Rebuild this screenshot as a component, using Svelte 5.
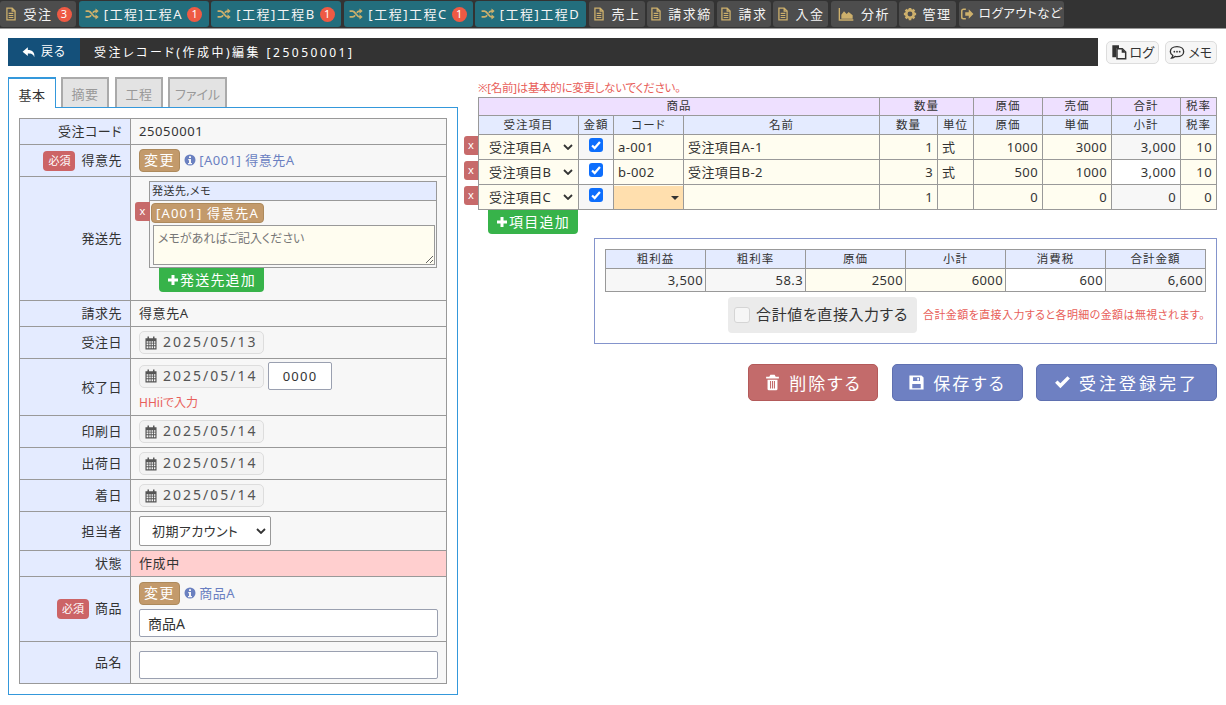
<script>
  const navs = [
    { t: '受注', i: 'file', n: 3, w: 76 },
    { t: '[工程]工程A', i: 'random', n: 1, teal: true, w: 130 },
    { t: '[工程]工程B', i: 'random', n: 1, teal: true, w: 130 },
    { t: '[工程]工程C', i: 'random', n: 1, teal: true, w: 129 },
    { t: '[工程]工程D', i: 'random', teal: true, w: 111 },
    { t: '売上', i: 'file', w: 56 },
    { t: '請求締', i: 'file', w: 67 },
    { t: '請求', i: 'file', w: 54 },
    { t: '入金', i: 'file', w: 55 },
    { t: '分析', i: 'chart', w: 66, wide: true },
    { t: '管理', i: 'cog', w: 57 },
    { t: 'ログアウトなど', i: 'signout', w: 105, tight: true }
  ];
  const items = [
    { s: '受注項目A', c: 'a-001', n: '受注項目A-1', q: 1, u: '式', g: 1000, p: 3000, t: '3,000', r: 10, grey: true },
    { s: '受注項目B', c: 'b-002', n: '受注項目B-2', q: 3, u: '式', g: 500, p: 1000, t: '3,000', r: 10 },
    { s: '受注項目C', c: '', n: '', q: 1, u: '', g: 0, p: 0, t: '0', r: 0, grey: true, open: true }
  ];
  const totals = [
    ['粗利益', '3,500', ''], ['粗利率', '58.3', ''], ['原価', '2500', 'cream'],
    ['小計', '6000', 'cream'], ['消費税', '600', 'white'], ['合計金額', '6,600', '']
  ];
</script>

{#snippet icon(name, cls = '')}
  <svg class="ico {cls}" viewBox="0 0 24 24" aria-hidden="true">
    {#if name === 'file'}
      <path fill="none" stroke="currentColor" stroke-width="2.2" d="M5 2h9l5 5v15H5z M14 2v5h5"/>
      <path fill="none" stroke="currentColor" stroke-width="2" d="M8 11h8M8 14.5h8M8 18h8"/>
    {:else if name === 'random'}
      <path fill="none" stroke="currentColor" stroke-width="3" d="M1 7h5c5 0 7 10 12 10h2M1 17h5c2 0 3.500-1.500 4.500-3M13.500 10c1-1.500 2.500-3 4.500-3h2"/>
      <path fill="currentColor" d="M18 2.500l5.500 4.500-5.500 4.500zM18 12.500l5.500 4.500-5.500 4.500z"/>
    {:else if name === 'chart'}
      <path fill="none" stroke="currentColor" stroke-width="2" d="M2 3v18h21"/>
      <path fill="currentColor" d="M5 19v-6l4-5 4 4 3-3 6 5v5z"/>
    {:else if name === 'cog'}
      <circle cx="12" cy="12" r="6.500" fill="none" stroke="currentColor" stroke-width="4.500"/>
      <path fill="none" stroke="currentColor" stroke-width="4.500" d="M12 1.500v4M12 18.500v4M1.500 12h4M18.500 12h4M4.600 4.600l2.800 2.800M16.600 16.600l2.800 2.800M4.600 19.400l2.800-2.800M16.600 7.400l2.800-2.800"/>
    {:else if name === 'signout'}
      <path fill="none" stroke="currentColor" stroke-width="2.600" d="M10 4H6a3 3 0 0 0-3 3v10a3 3 0 0 0 3 3h4"/>
      <path fill="currentColor" d="M9 9h6V4l8 8-8 8v-5H9z"/>
    {:else if name === 'reply'}
      <path fill="currentColor" d="M10 4L1 11.500 10 19v-4.500c6 0 9.500 1 11 6.500 1.500-8-3-12.500-11-12.500z"/>
    {:else if name === 'files'}
      <path fill="currentColor" d="M2 2h10v4H8v14H2z"/>
      <path fill="none" stroke="currentColor" stroke-width="2.200" d="M9 7h8l5 5v10H9z"/>
      <path fill="currentColor" d="M16 7v6h6z"/>
    {:else if name === 'comment'}
      <path fill="none" stroke="currentColor" stroke-width="2" d="M12 4c6 0 10 3.200 10 7.500S18 19 12 19c-1 0-2-.1-3-.4C7.500 20 6 20.800 4 21c1-1.200 1.600-2.500 1.800-3.800C3.500 15.800 2 13.800 2 11.500 2 7.200 6 4 12 4z"/>
      <circle cx="8" cy="11.500" r="1.300" fill="currentColor"/><circle cx="12" cy="11.500" r="1.300" fill="currentColor"/><circle cx="16" cy="11.500" r="1.300" fill="currentColor"/>
    {:else if name === 'calendar'}
      <path fill="currentColor" fill-rule="evenodd" d="M6 1h2.500v3H15.500V1H18v3h3.500v19h-19V4H6zM4.500 9v2.500h3V9zM9 9v2.500h2.500V9zM13 9v2.500h2.500V9zM17 9v2.500h2.500V9zM4.500 13v3h3v-3zM9 13v3h2.500v-3zM13 13v3h2.500v-3zM17 13v3h2.500v-3zM4.500 17.500V21h3v-3.500zM9 17.500V21h2.500v-3.500zM13 17.500V21h2.500v-3.500zM17 17.500V21h2.500v-3.500z"/>
    {:else if name === 'info'}
      <path fill="currentColor" fill-rule="evenodd" d="M12 1a11 11 0 1 0 0 22 11 11 0 0 0 0-22zM10 4.500h4V8h-4zM8.500 10h5.500v8h2v2.500H8V18h2v-5.500H8.500z"/>
    {:else if name === 'plus'}
      <path fill="currentColor" d="M9 2h6v7h7v6h-7v7H9v-7H2V9h7z"/>
    {:else if name === 'trash'}
      <path fill="currentColor" fill-rule="evenodd" d="M9 1h6l1.500 3H21v2.500H3V4h4.500zM5 8h14v13a2 2 0 0 1-2 2H7a2 2 0 0 1-2-2zM8.500 10v10.500h1.500V10zM11.300 10v10.500h1.500V10zM14 10v10.500h1.500V10z"/>
    {:else if name === 'save'}
      <path fill="currentColor" fill-rule="evenodd" d="M2 2h17l3 3v17H2zM7 4.500V10h10V4.500zM13 5.500h2.500V9H13zM6 14v6h12v-6z"/>
    {:else if name === 'check'}
      <path fill="currentColor" d="M9 20L1.500 12.500 5 9l4 4L19 3l3.500 3.500z"/>
    {/if}
  </svg>
{/snippet}

{#snippet dateBtn(v)}
  <span class="date">{@render icon('calendar', 'cal')}<span>{v}</span></span>
{/snippet}

<nav class="nav">
  {#each navs as n}
    <a class="nav-item" class:teal={n.teal} class:tight={n.tight} class:wide={n.wide} style="width:{n.w}px">
      {@render icon(n.i, 'nav-ico')}
      <span>{n.t}</span>
      {#if n.n}<b class="count">{n.n}</b>{/if}
    </a>
  {/each}
</nav>

<header class="head">
  <div class="titlebar">
    <a class="back">{@render icon('reply', 'back-ico')}戻る</a>
    <h1>受注レコード(作成中)編集 [25050001]</h1>
  </div>
  <a class="mini">{@render icon('files', 'mini-ico')}ログ</a>
  <a class="mini">{@render icon('comment', 'mini-ico')}メモ</a>
</header>

<main class="main">
  <section class="left">
    <div class="tabs">
      <span class="tab active t48">基本</span>
      <span class="tab t48">摘要</span>
      <span class="tab t48 shifted">工程</span>
      <span class="tab t59">ファイル</span>
    </div>
    <div class="panel">
      <table class="form">
        <tbody>
          <tr class="h26"><th>受注コード</th><td>25050001</td></tr>
          <tr class="h32"><th><span class="req">必須</span>得意先</th>
            <td><span class="chg">変更</span>{@render icon('info', 'info-ico')}<span class="link">[A001] 得意先A</span></td></tr>
          <tr class="h124"><th>発送先</th>
            <td class="ship-cell">
              <div class="ship">
                <div class="ship-head">発送先,メモ</div>
                <div class="ship-body">
                  <span class="x ship-x">x</span>
                  <span class="chip">[A001] 得意先A</span>
                  <textarea class="memo" placeholder="メモがあればご記入ください"></textarea>
                </div>
              </div>
              <span class="add add-ship">{@render icon('plus', 'plus-ico')}発送先追加</span>
            </td></tr>
          <tr class="h26"><th>請求先</th><td>得意先A</td></tr>
          <tr class="h32"><th>受注日</th><td>{@render dateBtn('2025/05/13')}</td></tr>
          <tr class="h57"><th>校了日</th>
            <td class="top-cell">
              <div class="time-row">{@render dateBtn('2025/05/14')}<input class="time" value="0000" /></div>
              <div class="hint">HHiiで入力</div>
            </td></tr>
          <tr class="h32"><th>印刷日</th><td>{@render dateBtn('2025/05/14')}</td></tr>
          <tr class="h32"><th>出荷日</th><td>{@render dateBtn('2025/05/14')}</td></tr>
          <tr class="h32"><th>着日</th><td>{@render dateBtn('2025/05/14')}</td></tr>
          <tr class="h39"><th>担当者</th>
            <td><select class="sel-user"><option>初期アカウント</option></select></td></tr>
          <tr class="h26"><th>状態</th><td class="pink">作成中</td></tr>
          <tr class="h65"><th><span class="req">必須</span>商品</th>
            <td>
              <div class="prod"><span class="chg">変更</span>{@render icon('info', 'info-ico')}<span class="link">商品A</span></div>
              <input class="text" value="商品A" />
            </td></tr>
          <tr class="h42"><th>品名</th><td class="low-cell"><input class="text" /></td></tr>
        </tbody>
      </table>
    </div>
  </section>

  <section class="right">
    <p class="warn">※[名前]は基本的に変更しないでください。</p>
    <table class="lines">
      <colgroup>
        <col class="c100" /><col class="c35" /><col class="c70" /><col class="c196" /><col class="c58" /><col class="c36" /><col class="c69" /><col class="c69" /><col class="c69" /><col class="c36" />
      </colgroup>
      <thead>
        <tr class="purple">
          <th colspan="4">商品</th><th colspan="2">数量</th><th>原価</th><th>売価</th><th>合計</th><th>税率</th>
        </tr>
        <tr class="blue">
          <th>受注項目</th><th>金額</th><th>コード</th><th>名前</th><th>数量</th><th>単位</th><th>原価</th><th>単価</th><th>小計</th><th>税率</th>
        </tr>
      </thead>
      <tbody>
        {#each items as it}
          <tr>
            <td class="cream sel-cell">
              <span class="x line-x">x</span>
              <select class="sel-item"><option>{it.s}</option></select>
            </td>
            <td class="chk-cell" class:greyc={it.grey}><input type="checkbox" class="check" checked /></td>
            <td class="cream pad">{#if it.open}<span class="orange"></span>{:else}{it.c}{/if}</td>
            <td class="cream pad">{it.n}</td>
            <td class="cream num">{it.q}</td>
            <td class="cream pad">{it.u}</td>
            <td class="cream num">{it.g}</td>
            <td class="cream num">{it.p}</td>
            <td class="num" class:greyc={it.grey}>{it.t}</td>
            <td class="cream num">{it.r}</td>
          </tr>
        {/each}
      </tbody>
    </table>
    <span class="add add-item">{@render icon('plus', 'plus-ico')}項目追加</span>

    <div class="summary">
      <table class="sum">
        <thead><tr>{#each totals as t}<th>{t[0]}</th>{/each}</tr></thead>
        <tbody><tr>{#each totals as t}<td class={t[2]}>{t[1]}</td>{/each}</tr></tbody>
      </table>
      <div class="direct">
        <label class="direct-label"><input type="checkbox" class="check off" />合計値を直接入力する</label>
        <span class="direct-note">合計金額を直接入力すると各明細の金額は無視されます。</span>
      </div>
    </div>

    <div class="actions">
      <button class="act del">{@render icon('trash', 'act-ico')}削除する</button>
      <button class="act save">{@render icon('save', 'act-ico')}保存する</button>
      <button class="act done">{@render icon('check', 'act-ico')}受注登録完了</button>
    </div>
  </section>
</main>

<style>
  :global(body) {
    margin: 0;
    background: #fff;
    color: #333;
    font: 13px/1.3 "Noto Sans", "Noto Sans CJK JP", sans-serif;
    font-feature-settings: "palt";
  }
  .ico { display: inline-block; width: 1em; height: 1em; flex: none; }

  .nav {
    display: flex; gap: 2.5px; height: 27px; padding-top: 1px;
    background: #333; border-bottom: 1px solid #999;
    font-size: 13px; letter-spacing: 1.5px;
  }
  .nav-item {
    box-sizing: border-box; display: flex; align-items: center; justify-content: center; gap: 5px;
    height: 26px; border-radius: 3px; background: #4d4d4d; color: #f4f4f4; white-space: nowrap;
  }
  .nav-item.teal { background: #236e7d; }
  .nav-item.tight { letter-spacing: .5px; font-size: 12.500px; }
  .nav-ico { width: 14px; height: 14px; color: #cdb06c; }
  .wide { gap: 6px; }
  .wide .nav-ico { width: 18px; height: 16px; }
  .wide :global(svg) { overflow: visible; }
  .count {
    display: inline-flex; align-items: center; justify-content: center;
    width: 15px; height: 15px; border-radius: 50%; background: #ee5a44; color: #fff;
    font-weight: 400; font-size: 11px; letter-spacing: 0; margin-left: -1px;
  }

  .head { display: flex; align-items: center; gap: 6px; margin: 9px 9px 0 8px; }
  .titlebar {
    display: flex; align-items: stretch; flex: 0 0 1090px; height: 28px;
    margin-right: 2px; background: #333; color: #fff;
  }
  .back {
    display: flex; align-items: center; justify-content: center; gap: 5px; width: 72px;
    background: #14507a; font-size: 12px; letter-spacing: 1px;
  }
  .back-ico { width: 14px; height: 14px; }
  h1 { margin: 0 0 0 14px; font-size: 12px; font-weight: 400; line-height: 29px; letter-spacing: 2.500px; }
  .mini {
    box-sizing: border-box; display: flex; align-items: center; justify-content: center; gap: 3px;
    width: 53px; height: 23px; border: 1px solid #ddd; border-radius: 5px; background: #f6f6f6;
    color: #333; font-size: 13px; letter-spacing: 0;
  }
  .mini-ico { width: 16px; height: 16px; }

  .main { display: flex; align-items: flex-start; padding: 11px 9px 0 8px; gap: 20px; }
  .left { flex: 0 0 450px; }
  .right { flex: 1; min-width: 0; }

  .tabs { display: flex; gap: 5px; height: 30px; }
  .tab {
    box-sizing: border-box; display: flex; align-items: center; justify-content: center;
    height: 30px; padding: 3px 0 0; background: #e3e3e3; color: #999;
    border: 2px solid #aaa; border-bottom: 0; font-size: 13px; letter-spacing: .5px;
  }
  .t48 { width: 48px; }
  .t59 { width: 59px; letter-spacing: 0; }
  .shifted { margin-left: 1px; }
  .tab.active {
    position: relative; z-index: 1; height: 31px; background: #fff; color: #333;
    border: 1px solid #3498db; border-top-width: 2px; border-bottom: 0;
  }
  .panel { border: 1px solid #3498db; padding: 10px 10px 10px; }

  table { border-collapse: collapse; }
  .form { width: 100%; table-layout: fixed; }
  .form th, .form td { border: 1px solid #999; padding: 0; }
  .form th {
    width: 102px; padding-right: 8px; background: #e4ebff; text-align: right;
    font-weight: 400; letter-spacing: .5px; white-space: nowrap;
  }
  .form td { padding: 0 8px; background: #f7f7f7; letter-spacing: .6px; }
  .h26 { height: 26px; } .h32 { height: 32px; } .h124 { height: 124px; } .h57 { height: 57px; }
  .h39 { height: 39px; } .h65 { height: 65px; } .h42 { height: 42px; }
  .form td.pink { background: #ffcfcf; }
  .form td.top-cell { vertical-align: top; padding-top: 3px; }
  .form td.low-cell { padding-top: 4px; }

  .req {
    display: inline-block; padding: 2px 5px; margin-right: 6px; border-radius: 4px;
    background: #cc6466; color: #fff; font-size: 11px; letter-spacing: 0; line-height: 16px;
  }
  .chg {
    display: inline-block; padding: 1px 4px 2px; border: 1px solid #ad8a5c; border-radius: 4px;
    background: #c39a6b; color: #fff; font-size: 14px; letter-spacing: 1.600px; line-height: 18px;
  }
  .info-ico { width: 12px; height: 12px; color: #6a80c0; margin: 0 3px 0 4px; vertical-align: -1px; }
  .link { color: #6a7fc1; letter-spacing: .5px; }

  .ship-cell { position: relative; vertical-align: top; }
  .ship { margin: 4px 0 0 10px; width: 288px; box-sizing: border-box; border: 1px solid #999; position: relative; }
  .ship-head { height: 18px; line-height: 18px; padding-left: 2px; background: #e4ebff; border-bottom: 1px solid #999; font-size: 11px; letter-spacing: .5px; }
  .ship-body { padding: 2px 2px 2px 1px; height: 66px; box-sizing: border-box; }
  .x {
    position: absolute; display: flex; align-items: center; justify-content: center;
    background: #c76a6a; color: #fff; font-size: 11px; border-radius: 3px 0 0 3px; letter-spacing: 0;
  }
  .ship-x { left: -15px; top: 20px; width: 15px; height: 19px; }
  .chip {
    display: inline-block; padding: 0 4px; border: 1px solid #ad8a5c; border-radius: 4px; background: #c39a6b;
    color: #fff; font-size: 13px; letter-spacing: 1.200px; line-height: 18px; white-space: nowrap;
  }
  .memo {
    display: block; box-sizing: border-box; width: 282px; height: 40px; margin: 2px 0 0 2px; padding: 3px 4px;
    border: 1px solid #999; background: #fffdf0; font: 12px "Noto Sans", "Noto Sans CJK JP", sans-serif; font-feature-settings: "palt"; letter-spacing: 0;
  }
  .memo::placeholder { color: #777; }
  .add {
    display: inline-flex; align-items: center; justify-content: center; gap: 1px; box-sizing: border-box;
    height: 24px; border-radius: 0 0 4px 4px; background: #37b34a; color: #fff; font-size: 14px; letter-spacing: 1.200px;
  }
  .add-ship { width: 105px; margin-left: 20px; }
  .add-item { width: 90px; margin-left: 10px; }
  .plus-ico { width: 12px; height: 12px; }

  .date {
    box-sizing: border-box; display: inline-flex; align-items: center; gap: 5px; width: 125px; height: 23px; padding-left: 4px;
    border: 1px solid #ddd; border-radius: 5px; background: #f3f3f3; color: #555; font-size: 14px; letter-spacing: 2px;
    vertical-align: middle;
  }
  .cal { width: 14px; height: 14px; color: #555; }
  .time-row { display: flex; align-items: center; gap: 4px; }
  .time {
    box-sizing: border-box; width: 64px; height: 28px; border: 1px solid #9aa0b0; border-radius: 2px; background: #fff;
    text-align: center; color: #333; font: 13px "Noto Sans", sans-serif; letter-spacing: 1.200px; padding: 0;
  }
  .hint { margin-top: 5px; font-size: 12px; color: #e8605a; letter-spacing: 0; }

  select {
    appearance: none; -webkit-appearance: none; color: #333;
    background: #fff url("data:image/svg+xml,%3Csvg xmlns='http://www.w3.org/2000/svg' viewBox='0 0 10 6'%3E%3Cpath fill='none' stroke='%23333' stroke-width='1.800' d='M1 1l4 4 4-4'/%3E%3C/svg%3E") no-repeat;
    background-size: 10px 6px;
    font: 13px "Noto Sans", "Noto Sans CJK JP", sans-serif;
    font-feature-settings: "palt";
  }
  .sel-user {
    display: block; box-sizing: border-box; width: 132px; height: 30px; padding-left: 12px;
    border: 1px solid #999; border-radius: 2px; background-position: right 4px center; letter-spacing: .4px;
  }
  .text {
    display: block; box-sizing: border-box; width: 299px; height: 28px; padding: 0 8px; background: #fff;
    border: 1px solid #9aa0b0; border-radius: 2px; color: #333; font: 14px "Noto Sans", "Noto Sans CJK JP", sans-serif; font-feature-settings: "palt";
  }
  .prod { margin-bottom: 4px; }

  .warn { margin: 0; height: 20px; line-height: 22px; font-size: 11.500px; color: #e8605a; letter-spacing: -.3px; white-space: nowrap; }
  .lines { table-layout: fixed; width: 738px; }
  .c100 { width: 100px; } .c35 { width: 35px; } .c70 { width: 70px; } .c196 { width: 196px; }
  .c58 { width: 58px; } .c36 { width: 36px; } .c69 { width: 69px; }
  .lines th, .lines td { border: 1px solid #999; padding: 0; }
  .lines th { height: 18px; font-weight: 400; font-size: 11.500px; letter-spacing: 1px; }
  .purple th { background: #eee0ff; height: 17px; }
  .blue th { background: #e4ebff; }
  .lines td { height: 24px; font-size: 13px; white-space: nowrap; letter-spacing: .4px; }
  .cream { background: #fffdf0; }
  .greyc { background: #f7f7f7; }
  .white { background: #fff; }
  .pad { padding-left: 4px !important; }
  .num { text-align: right; padding-right: 4px !important; }
  .sel-cell { position: relative; }
  .line-x { left: -15px; top: 1px; width: 14px; height: 19px; }
  .sel-item {
    display: block; width: 100%; height: 24px; border: 0; padding-left: 10px; background-color: transparent;
    background-position: right 5px center; box-sizing: border-box; letter-spacing: .4px;
  }
  .chk-cell { text-align: center; }
  .check {
    appearance: none; -webkit-appearance: none; display: block; width: 14px; height: 14px; margin: -4px auto 0;
    border-radius: 3px; background: #0d6efd url("data:image/svg+xml,%3Csvg xmlns='http://www.w3.org/2000/svg' viewBox='0 0 16 16'%3E%3Cpath fill='none' stroke='%23fff' stroke-width='2.500' d='M3.500 8.500l3 3 6-7'/%3E%3C/svg%3E") center/contain no-repeat;
  }
  .check.off {
    background: #f6f6f6; border: 1px solid #d5d5d5; width: 16px; height: 16px; margin: 0 6px 0 0; border-radius: 3px;
  }
  .orange { display: block; position: relative; height: 23px; margin-left: -4px; background: #ffdfae; }
  .orange::after {
    content: ""; position: absolute; right: 4px; top: 10px; border: 4px solid transparent; border-top-color: #333; border-bottom: 0;
  }

  .summary {
    box-sizing: border-box; width: 623px; height: 106px; margin: 4px 0 0 116px; padding: 10px; border: 1px solid #8494cc;
  }
  .sum { width: 601px; table-layout: fixed; }
  .sum th, .sum td { border: 1px solid #999; padding: 0 2px; }
  .sum th { height: 18px; background: #e4ebff; font-weight: 400; font-size: 11.500px; letter-spacing: 1px; }
  .sum td { height: 22px; text-align: right; background: #f7f7f7; font-size: 13px; letter-spacing: .4px; }
  .sum td.cream { background: #fffdf0; }
  .sum td.white { background: #fff; }
  .direct { display: flex; align-items: center; justify-content: flex-end; gap: 6px; margin-top: 5px; margin-right: 1px; }
  .direct-label {
    box-sizing: border-box; display: flex; align-items: center; height: 36px; width: 189px; padding-left: 6px;
    background: #ebebeb; border-radius: 4px; font-size: 15px; letter-spacing: .6px; white-space: nowrap;
  }
  .direct-note { font-size: 11px; color: #e8605a; letter-spacing: .4px; white-space: nowrap; }

  .actions { display: flex; justify-content: flex-end; gap: 13.500px; margin-top: 20px; }
  .act {
    box-sizing: border-box; display: flex; align-items: center; justify-content: center; gap: 8px; height: 37px;
    border-radius: 5px; color: #fff; font: 17px "Noto Sans", "Noto Sans CJK JP", sans-serif; font-feature-settings: "palt"; letter-spacing: 2px; padding: 0;
  }
  .act-ico { width: 17px; height: 17px; }
  .del { width: 130px; background: #c36b6b; border: 1px solid #b35a5a; }
  .save { width: 131px; background: #6e80c2; border: 1px solid #5f70b0; }
  .done { width: 181px; background: #6e80c2; border: 1px solid #5f70b0; letter-spacing: 3px; }
</style>
